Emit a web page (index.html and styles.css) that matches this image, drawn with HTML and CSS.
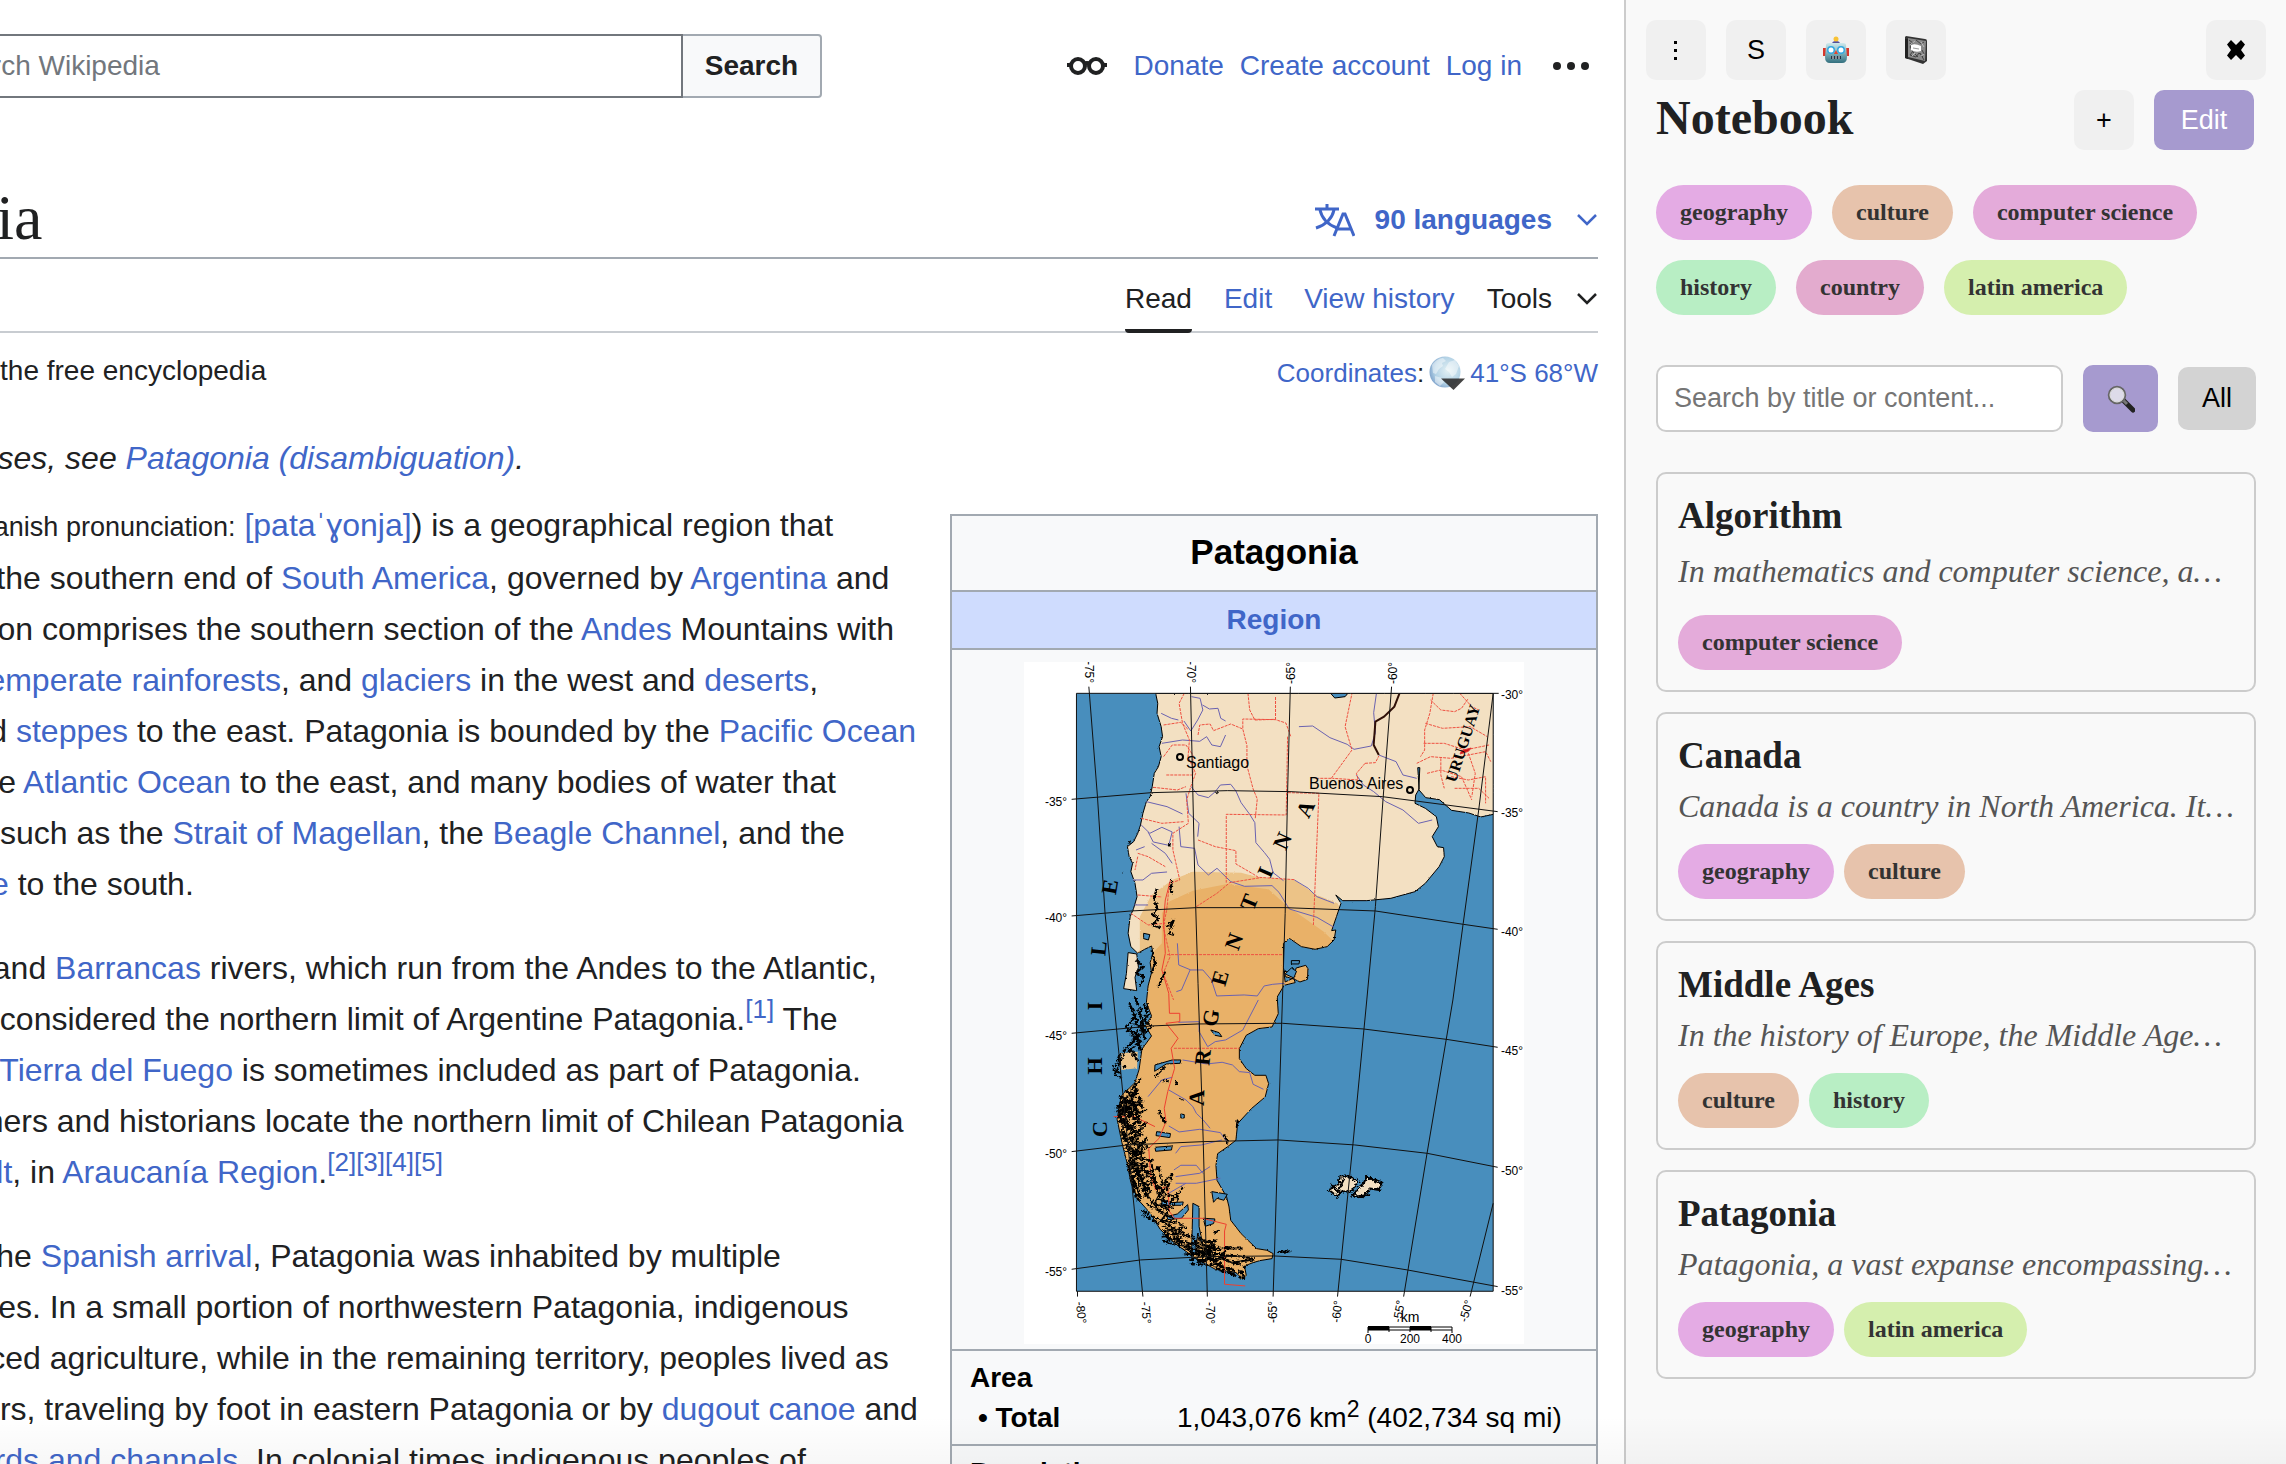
FILE: index.html
```html
<!DOCTYPE html>
<html lang="en">
<head>
<meta charset="utf-8">
<title>Patagonia - Wikipedia</title>
<link rel="stylesheet" href="styles.css">
</head>
<body>
<div class="window">
  <div class="wiki">
    <div class="page">
      <header class="site-header">
        <form class="site-search" onsubmit="return false">
          <input class="site-search-input" type="search" aria-label="Search Wikipedia" placeholder="Search Wikipedia">
          <button class="site-search-button" type="submit">Search</button>
        </form>
        <nav class="user-links" aria-label="Personal tools">
          <button class="icon-button appearance" type="button" aria-label="Appearance">
            <svg width="40" height="20" viewBox="0 0 40 20" fill="none" stroke="#202122" stroke-width="4"><circle cx="11" cy="10" r="7"/><circle cx="29" cy="10" r="7"/><path d="M17 8q3-2 6 0M0 9h4M36 9h4"/></svg>
          </button>
          <a href="#donate">Donate</a>
          <a href="#create">Create account</a>
          <a href="#login">Log in</a>
          <button class="icon-button more" type="button" aria-label="More options">
            <svg width="38" height="10" viewBox="0 0 38 10" fill="#202122"><circle cx="5" cy="5" r="4"/><circle cx="19" cy="5" r="4"/><circle cx="33" cy="5" r="4"/></svg>
          </button>
        </nav>
      </header>

      <div class="title-row">
        <h1 class="article-title">Patagonia</h1>
        <button class="languages" type="button">
          <svg width="40" height="34" viewBox="0 0 40 34" fill="none" stroke="#4066c8" stroke-width="3"><path d="M0 6h24M12 1v5M5 7c2 9 9 15 17 18M19 7C17 16 10 22 1 25" /><path d="M19 33l9-22h2l9 22M22 26h14"/></svg>
          <span>90 languages</span>
          <svg class="chevron" width="22" height="14" viewBox="0 0 22 14" fill="none" stroke="#4066c8" stroke-width="2.500"><path d="M2 2l9 9 9-9"/></svg>
        </button>
      </div>

      <nav class="tabs" aria-label="Views">
        <a class="tab tab-active" href="#read">Read</a>
        <a class="tab" href="#edit">Edit</a>
        <a class="tab" href="#history">View history</a>
        <button class="tab tab-tools" type="button">Tools
          <svg class="chevron" width="22" height="14" viewBox="0 0 22 14" fill="none" stroke="#202122" stroke-width="2.500"><path d="M2 2l9 9 9-9"/></svg>
        </button>
      </nav>

      <div class="subtitle-row">
        <div class="tagline">From Wikipedia, the free encyclopedia</div>
        <div class="coordinates">
          <span><a href="#coordinates">Coordinates</a>:</span>
          <svg width="36" height="34" viewBox="0 0 36 34">
            <defs><radialGradient id="globe" cx=".6" cy=".45" r=".6"><stop offset="0" stop-color="#e4f1f4"/><stop offset=".7" stop-color="#b4d3e6"/><stop offset="1" stop-color="#86a9cf"/></radialGradient></defs>
            <circle cx="16" cy="16" r="15.500" fill="url(#globe)"/>
            <path d="M3 9c3-4 7-7 11-7l3 3-4 2 1 3-4 3-3 5-3-1zM20 6l6-2 4 6-3 8-4 3-3-5-4-3zM6 20l7 2 2 4-4 4-5-4z" fill="#fff" opacity=".45"/>
            <path d="M12 22.500h24L24.500 34z" fill="#333" opacity=".92"/>
          </svg>
          <a href="#geohack">41°S 68°W</a>
        </div>
      </div>

      <p class="hatnote">For other uses, see <a href="#disambiguation">Patagonia (disambiguation)</a>.</p>

      <div class="article">
        <main class="prose">
          <p><b>Patagonia</b> <span class="small">(Spanish pronunciation:</span> <a href="#ipa">[pataˈɣonja]</a>) is a geographical region that encompasses the southern end of <a href="#sa">South America</a>, governed by <a href="#ar">Argentina</a> and <a href="#cl">Chile</a>. The region comprises the southern section of the <a href="#andes">Andes</a> Mountains with lakes, fjords, <a href="#rainforest">temperate rainforests</a>, and <a href="#glaciers">glaciers</a> in the west and <a href="#deserts">deserts</a>, tablelands, and <a href="#steppes">steppes</a> to the east. Patagonia is bounded by the <a href="#pacific">Pacific Ocean</a> on the west, the <a href="#atlantic">Atlantic Ocean</a> to the east, and many bodies of water that connect them, such as the <a href="#magellan">Strait of Magellan</a>, the <a href="#beagle">Beagle Channel</a>, and the <a href="#drake">Drake Passage</a> to the south.</p>
          <p>The <a href="#colorado">Colorado</a> and <a href="#barrancas">Barrancas</a> rivers, which run from the Andes to the Atlantic, are commonly considered the northern limit of Argentine Patagonia.<sup><a href="#n1">[1]</a></sup> The archipelago of <a href="#tierra">Tierra del Fuego</a> is sometimes included as part of Patagonia. Most geographers and historians locate the northern limit of Chilean Patagonia at <a href="#fault">Huincul Fault</a>, in <a href="#araucania">Araucanía Region</a>.<sup><a href="#n2">[2]</a><a href="#n3">[3]</a><a href="#n4">[4]</a><a href="#n5">[5]</a></sup></p>
          <p>At the time of the <a href="#arrival">Spanish arrival</a>, Patagonia was inhabited by multiple indigenous tribes. In a small portion of northwestern Patagonia, indigenous peoples practiced agriculture, while in the remaining territory, peoples lived as hunter-gatherers, traveling by foot in eastern Patagonia or by <a href="#canoe">dugout canoe</a> and through the <a href="#fjords">fjords and channels</a>. In colonial times indigenous peoples of</p>
        </main>

        <table class="infobox">
          <tr><th class="infobox-title" colspan="2">Patagonia</th></tr>
          <tr><th class="infobox-type" colspan="2"><a href="#region">Region</a></th></tr>
          <tr><td class="infobox-map" colspan="2">
<svg class="map" viewBox="0 0 500 682" role="img" aria-label="Map of Patagonia">
  <defs>
    <clipPath id="frame"><rect x="222" y="130" width="1210" height="1794"/></clipPath>
    <path id="land" d="M452 130l6 30-2 30 12 40 4 30-10 30 6 30-8 30-12 20-6 40-6 30-11 15-10 35-7 35-8 25-12 25-18 15 5 30 10 20-5 25 12 35 6 40-10 35-10 25-6 50 8 40 20 20 20-12 20-10 4 20-8 30 4 30-10 40-5 50 15 40-18 30 18 30-28 40-8 60-12 40-40 40-12 70 14 70 16 65 10 55 20 50 35 40 30 50 40 40 60 45 60 35 60 10 20 20 10-12-5-28 25-10 20-6 35-6 3-15-18-10-30-5-45-45-30-40-5-40-7-30-28-50-3-45 5-35 28-20 25-20 5-50 40-45 40-35 10-40-8-25-32 0-25-20-20-30 0-30 20-40 35-20 40-5 18-40-3-50 20-35 32-8-4-14-25 12-4-32 32 4 4-14 28-8 6 10-1 32-22 8-16-8-26-8-6-26 0-74 17-15 35 25 40 8 35-8 20-20 5-30-12 2 14-42 13-40-15-25 20 17 70 0 70-7 70-20 30-25 40-50 15-30-2-27-18-3-15-30 18-30-6-30-32-25-30-15 2-25 10-18-4-64 6 0-3 66 20 24 40 6 35 32 50 8 35 12 37-8V130z"/>
    <clipPath id="land-clip"><use href="#land"/></clipPath>
    <filter id="rough" x="-10%" y="-10%" width="120%" height="120%"><feTurbulence type="fractalNoise" baseFrequency=".16" numOctaves="2" seed="4"/><feDisplacementMap in="SourceGraphic" scale="14" xChannelSelector="R" yChannelSelector="G"/></filter>
    <filter id="rough-coast" x="-10%" y="-10%" width="120%" height="120%"><feTurbulence type="fractalNoise" baseFrequency=".2" numOctaves="2" seed="7"/><feDisplacementMap in="SourceGraphic" scale="6" xChannelSelector="R" yChannelSelector="G"/></filter>
  </defs>
  <rect width="500" height="682" fill="#fff"/>
  <g transform="translate(-24 -12) scale(.3444 .3333)">
    <rect x="222" y="130" width="1210" height="1794" fill="#488ebd"/>
    <g clip-path="url(#frame)">
      <g filter="url(#rough-coast)">
      <use href="#land" fill="#f3e0c2"/>
      <g clip-path="url(#land-clip)">
        <path fill="#ecc387" d="M406 900V800l34-65 60-45 60-25 140 3 55 15 100 7 65 45 60 25 40 80v160l-200 1050H200V1100z"/>
        <path fill="#e9b167" d="M425 930l45-50V790l20-35 70-33 100-20 120 16 50 47 110 80 100 100v1100H200V1080z"/>
      </g>
      <path fill="#f3e0c2" d="M372 908l25 4 5 40-10 30 5 40-38-6 8-45z"/>
      <path fill="#ecc387" d="M350 1210l50-5-2 50-45 5z"/>
      <g class="coast"><use href="#land"/><path d="M372 908l25 4 5 40-10 30 5 40-38-6 8-45z"/></g>
      <path class="lake" d="M470 1650l30 8 32-2-2 10-60 0zM615 1625l45 8-10 18-20-6-10 12zM485 1700l30-8 30-28 2 16-20 25-40 4zM560 1660l18 10 0 60 12 60-16-40-6 60-12 10zM590 1705l34 2-4 14-24 8zM846 932l24 0-2 10-22 0zM828 972l18-18 15 10-8 20zM455 1445l40 6-2 12-40-6zM450 1492l50-4-2 12-46 4zM450 1245l50-15 25 0-2 10-40 2-34 22zM612 1140l24 8 8 12-20-4zM417 850l18 4-4 16-14-4zM520 1345l14 6M525 1392l10 2 0 10-10 0z"/>
      </g>
      <path class="lake" d="M960 130l12 14 30-4 8-10z"/>
      <g class="river">
        <path d="M468 190l30 15 20 5M556 140l25 5 8 35-15 30-20 33-20-30M588 165l20 12 25-2 8 30 14 8M470 280l60-10 50 4 20-14 15 25 25 5 15-35M555 410l20 25 30 8 20-18 15-20 30-2 15 20 15 35 25 35 15 25 3 60 25 30 15 20 10 40 30 24"/>
        <path d="M868 230l40-2 50 35 50 20 20 15 50-10 12-40-5-60 8-58M1100 315l50 20 20 40 40 10M1035 375l20 30 30 20 35 30 50 25 45 40 40-10M425 455l60 15 45 22M410 525l25 25 35-18 30 14-10 40-45-10-15-30M540 430l8 60 30 30-4 40M520 530l5 60 40 5 10 50 30 30 25-20 40 40 40 14 80-2 20 20 30 50 80 25 50 30M385 690l30 0 25-20 45-4M440 580l40 30 20 30M390 765l40 0M395 600l25-10"/>
        <path d="M855 690l40 25 25 25 50 20M515 880l4 65 35 15 35 0 25 30 15 48 80-3 38 3 20-30 25-5 35-3M552 960l-25 60-15 5M750 1050l-45 90-50 30-30 5-22 15-25-45 0-30-60 2M530 1230l70 12 45-5 30 8 20 20 30 3 10 35 30 15M490 1320l50 30 20 20 10 20 20 20 20 25M490 1428l30 18 60-8 60 10 20 30M510 1510l15-20 60-5 60-15M505 1560l20-14 45 0 20 25M510 1580l70-10 30-20M510 1600l60 0 70-15M490 1630l50-30M430 1340l40-50 30-8"/>
      </g>
      <g class="border">
        <path d="M535 130l-15 30 10 60 20 50-4 50 22 50-14 40-12 40 5 70-45 30 0 50 20 90-30 10-8 80-10 50 20 90-20 50 30 80M720 130l5 50 15 30 60-2 0-70M705 235l0-28 95 2 30 10 14 40M575 255l5-30 30-3 10 20 50-20 35 15 12 50 0 60 18 70 12 30-6 60M835 260l-4 235-174-2 0 205M836 428l90 2-16 395M962 385l-38 0M962 385l60-85-20-70 20-100M1060 340l-25 30 5 20-75-5M1060 340l30-2 10-20M575 570l50 20 60 12 0 40 50 30 15 10 105 7M570 770l60-40 37-32 90-15M485 914h335M505 1195h190"/>
        <path d="M1258 130l-10 60-15 50 0 60-12 20M1250 150l30 30 40 5 20-10 20-30M1335 130l35 40 20 10M1235 220l50 15 80-5 50 30M1230 280l60 0 60 20 70-15M1210 340l40-20 60 5 100-20 15 30M1240 370l40-10 60 20 30 70M1280 325l0 50 10 40M1360 310l20 60-10 70M1310 380l50 10 50-10 0 80M1320 415l70 0 30 30M475 225l50-8 20 20M475 320l25-35 40 0 20 30 0 60-80 0M445 412l70 8 25-10M410 505l60 15 65-5M400 610l30 10 50 30M400 620l-8 40M400 735l70 6M380 790l50 35 50-5"/>
      </g>
      <path class="border-solid" d="M495 690l-15 60-5 60 5 100-10 50 20 70 2 60 30 0 0 25-40 5 35 45-20 30 10 60-20 70-10 50 5 40-20 50-30 30 5 80 15 45 35-10 5 75 15 20 80 0 70 18-5 20 0 160 60 5M450 1430l-60-30-60 0"/>
      <path fill="none" stroke="#301008" stroke-width="2" d="M1160 130l-15 40-30 30-25 15-5 70 15 30"/>
      <path d="M1340 302l28-8-8 10-24 8z" fill="#c11" stroke="#d33" stroke-width="1"/>
      <g filter="url(#rough)">
        <path id="isles" class="isles" d="M375 1060l20 40-30 30 40 30-35 30 30 30M400 1080l15 30-20 40 10 40M350 1210l-20 50 20 10M395 1300l-20 30 20 40-40-20-10 50 40-30 20 30-50 20 0 40 50-20-40 50 30 20 15-30-40 60 10 30 30-20 M345 1340l35 10-40 20 50 10-45 20 40 30-30 20 35 20M375 1490l40 20-40 30 50 10-40 30 20 50 30-20-30-20 40-20 10 50 30-30-20 60 30 10 20-30 M380 1570l10 60 15 10M410 1680l70 40 40 30-50 10 70 20 20 20 50 10-60 20 70 0 20 20 60 20 M530 1800l80-10-20 30 60-10-30 30 60 20 M470 1740l50 30 60 20 40 20"/>
        <use href="#isles" x="16" y="-18"/>
        <use href="#isles" x="4" y="14"/>
        <path class="isles-thin" d="M430 1060l-10 50 20 20-20 20M440 1540l10 60 20 20-20 40 40 20-20 30 40 10M400 1560l30 80 40 50M640 1815l60 5 40 8-60 10M690 1860l20 20-10-20 10 30M480 1250l-30 30M500 690l-5 30 6 10M455 715l-8 30 10 30-15 20 20 10-20 20 25 10M485 830l20-20-15 40 15 5M480 965l-20 45M440 900l10 40-10 30M395 930l20 20-20 20 25 10-15 30M460 1380l20 40M470 1290l20 5M510 1290l5 15M655 1796h50M808 1806l35-2M690 1410l-3 22M650 1450l12 30M490 580l4 10M372 575l8 4M356 668l3 2M628 428l4 2M620 1750l15-8"/>
        <path class="falklands" d="M985 1580l30 0 25 15-20 30-30 0-10 15-25-20 30-20zM1065 1580l20 12 22 6-6 22-25-4-24 28-28-6 20-28 12-10z"/>
        <path class="falklands" d="M960 1600l25 30M1000 1585l-20 40M1030 1640l45-5M1060 1580l45 15"/>
      </g>
    </g>
    <g class="grid">
      <path d="M258 110l25 330 22 350 25 260 85 890M553 110l12 550 10 340 15 470 12 470M843 110l-8 320-7 360-8 260-27 890M1137 110l-25 340-22 320-25 280-40 430-45 460M1432 130l-42 350-45 340-30 230-75 460-68 430M1432 1660l-67 280M225 1924v16"/>
      <path d="M208 448l232-20 220-6 185 3 265 15 335 45M208 798l172-15 190-10h258l262 10 255 40 100 15M208 1150l232-22 135-6 245-2 235 17 240 31 150 24M208 1505l162-20 220-10 218-5 222 15 210 25 205 42M208 1858l200-28 192-10 195-2 195 10 193 32 262 50M1432 130h16"/>
      <rect x="222" y="130" width="1210" height="1794"/>
    </g>
  </g>
  <g class="degree">
    <text x="32" y="144">-35°</text><text x="32" y="260">-40°</text><text x="32" y="378">-45°</text><text x="32" y="496">-50°</text><text x="32" y="614">-55°</text>
    <text x="488" y="37">-30°</text><text x="488" y="155">-35°</text><text x="488" y="274">-40°</text><text x="488" y="393">-45°</text><text x="488" y="513">-50°</text><text x="488" y="633">-55°</text>
    <text transform="translate(61 10) rotate(90)">-75°</text><text transform="translate(163 10) rotate(90)">-70°</text><text transform="translate(271 11) rotate(-90)">-65°</text><text transform="translate(373 11) rotate(-90)">-60°</text>
    <text transform="translate(53 651) rotate(84)">-80°</text><text transform="translate(118 651) rotate(86)">-75°</text><text transform="translate(182 651) rotate(90)">-70°</text><text transform="translate(253 650) rotate(-90)">-65°</text><text transform="translate(317 650) rotate(-84)">-60°</text><text transform="translate(379 650) rotate(-80)">-55°</text><text transform="translate(446 650) rotate(-74)">-50°</text>
    <text x="344" y="681">0</text><text x="386" y="681">200</text><text x="428" y="681">400</text>
    <text class="km" x="386" y="660">km</text>
  </g>
  <path d="M344 671v-6h84v6M365 665v5M386 665v5M407 665v5M344 668h84" fill="none" stroke="#000"/>
  <path d="M344 664h21v4h-21zM386 664h21v4h-21z"/>
  <g class="city">
    <text x="162" y="106">Santiago</text><text x="285" y="127">Buenos Aires</text>
    <circle cx="156" cy="95" r="3"/><circle cx="386" cy="128" r="3"/>
  </g>
  <g class="country">
    <text transform="translate(288 150) rotate(-65)">A</text><text transform="translate(265 182) rotate(-65)">N</text><text transform="translate(248 213) rotate(-66)">I</text><text transform="translate(232 243) rotate(-68)">T</text><text transform="translate(217 282) rotate(-70)">N</text><text transform="translate(203 318) rotate(-74)">E</text><text transform="translate(194 357) rotate(-80)">G</text><text transform="translate(186 396) rotate(-84)">R</text><text transform="translate(180 436) rotate(-88)">A</text>
    <text transform="translate(83 467) rotate(-90)">C</text><text transform="translate(78 404) rotate(-90)">H</text><text transform="translate(78 344) rotate(-90)">I</text><text transform="translate(82 287) rotate(-84)">L</text><text transform="translate(93 226) rotate(-80)">E</text>
    <text class="uruguay" transform="translate(444 83) rotate(-72)">URUGUAY</text>
  </g>
</svg>
          </td></tr>
          <tr><th class="infobox-group" colspan="2">Area</th></tr>
          <tr class="infobox-item"><th scope="row">• Total</th><td>1,043,076 km<sup>2</sup> (402,734 sq mi)</td></tr>
          <tr><th class="infobox-group" colspan="2">Population</th></tr>
        </table>
      </div>
    </div>
  </div>

  <aside class="notebook">
    <div class="toolbar">
      <button class="tool" type="button" aria-label="Menu"><svg width="6" height="26" viewBox="0 0 6 26"><path d="M1 4h3v3H1zM1 12h3v3H1zM1 20h3v3H1z"/></svg></button>
      <button class="tool" type="button">S</button>
      <button class="tool" type="button" aria-label="Assistant">
        <svg width="26" height="28" viewBox="0 0 26 28"><defs><linearGradient id="bot" x2="0" y2="1"><stop offset="0" stop-color="#cfe9ec"/><stop offset=".5" stop-color="#7fb3bd"/><stop offset="1" stop-color="#336f7e"/></linearGradient></defs><path d="M0 12h3v8H0zM23 12h3v8h-3z" fill="#d8382c"/><path d="M9 8q0-3 4-3t4 3z" fill="#54509a"/><circle cx="13" cy="3" r="2.500" fill="#f8c234"/><path d="M3 9q0-2 3-2h14q3 0 3 2l1 12q0 6-5 6H7q-5 0-5-6z" fill="url(#bot)"/><circle cx="8" cy="14" r="4" fill="#35a8e0"/><circle cx="18" cy="14" r="4" fill="#35a8e0"/><circle cx="8" cy="14" r="2.500" fill="#fff"/><circle cx="18" cy="14" r="2.500" fill="#fff"/><path d="M13 14l2 4h-4z" fill="#e2452f"/><path d="M8 20h10v3H8z" fill="#234"/><path d="M10 20v3M13 20v3M16 20v3" stroke="#dfe9ea"/></svg>
      </button>
      <button class="tool" type="button" aria-label="Notebook">
        <svg width="24" height="28" viewBox="0 0 24 28"><path d="M2 0l19 3q2 0 2 2v20l-4 3L1 22V1z" fill="#333"/><path d="M4 2l18 3-1 20L4 21z" fill="#8a8a8a"/><path d="M5 4l4 3-3 4 3 4-3 4 6 2 3-4 4 4M12 4l5 4 3-2M18 14l2 4M6 7l3 6M16 17l4 7M9 16l5 5" stroke="#444" fill="none"/><path d="M6 9l5-4M17 6l3 5M8 20l3-3M17 20l3-2" stroke="#bbb"/><path d="M7 9q4-2 10 1v5q-5 2-10-1z" fill="#fff"/><path d="M9 12l6 1" stroke="#999"/><path d="M1 3v19l3 1V3z" fill="#222"/></svg>
      </button>
      <button class="tool tool-close" type="button" aria-label="Close">
        <svg width="20" height="22" viewBox="0 0 20 20"><path d="M5 0l5 5 5-5 4 4.500-4 5.500 4 5.500-4 4.500-5-5-5 5-4-4.500 4-5.500-4-5.500z"/></svg>
      </button>
    </div>

    <div class="notebook-body">
      <div class="notebook-header">
        <h2 class="notebook-title">Notebook</h2>
        <button class="tool" type="button">+</button>
        <button class="edit" type="button">Edit</button>
      </div>

      <div class="tags filter-tags">
        <span class="tag geography">geography</span>
        <span class="tag culture">culture</span>
        <span class="tag computer-science">computer science</span>
        <span class="tag history">history</span>
        <span class="tag country-tag">country</span>
        <span class="tag latin-america">latin america</span>
      </div>

      <form class="note-search" onsubmit="return false">
        <input class="note-search-input" type="text" aria-label="Search notes" placeholder="Search by title or content...">
        <button class="note-search-button" type="submit" aria-label="Search">
          <svg width="28" height="28" viewBox="0 0 28 28"><path d="M17 16l9 9" stroke="#222" stroke-width="5" stroke-linecap="round"/><path d="M16 15l4 4" stroke="#777" stroke-width="3"/><circle cx="10" cy="10" r="8" fill="#dddbe9" stroke="#666" stroke-width="2.500"/><circle cx="10" cy="10" r="7" fill="none" stroke="#eee"/></svg>
        </button>
        <button class="note-all" type="button">All</button>
      </form>

      <div class="notes">
        <article class="note">
          <h3 class="note-title">Algorithm</h3>
          <p class="excerpt excerpt-tall">In mathematics and computer science, an algorithm is a finite sequence of instructions.</p>
          <div class="tags"><span class="tag computer-science">computer science</span></div>
        </article>
        <article class="note">
          <h3 class="note-title">Canada</h3>
          <p class="excerpt">Canada is a country in North America. Its ten provinces and three territories extend from coast to coast.</p>
          <div class="tags"><span class="tag geography">geography</span><span class="tag culture">culture</span></div>
        </article>
        <article class="note">
          <h3 class="note-title">Middle Ages</h3>
          <p class="excerpt">In the history of Europe, the Middle Ages lasted from the 5th to the late 15th centuries.</p>
          <div class="tags"><span class="tag culture">culture</span><span class="tag history">history</span></div>
        </article>
        <article class="note">
          <h3 class="note-title">Patagonia</h3>
          <p class="excerpt">Patagonia, a vast expanse encompassing the southern end of South America.</p>
          <div class="tags"><span class="tag geography">geography</span><span class="tag latin-america">latin america</span></div>
        </article>
      </div>
    </div>
  </aside>
</div>
</body>
</html>
```
FILE: styles.css
```css
* { box-sizing: border-box; }

body {
  margin: 0;
  background: #fff;
  color: #202122;
  font-family: "Liberation Sans", Arial, sans-serif;
  font-size: 28px;
}

button, input { font-family: inherit; color: inherit; }
button { border: 0; padding: 0; background: none; cursor: pointer; }
a { color: #4066c8; text-decoration: none; }
svg { display: block; }
h1, h2, h3, p { margin: 0; }

.window {
  display: flex;
  height: 100vh;
  overflow: hidden;
  position: relative;
}

/* soft shade along the lower edge of the window */
.window::after {
  content: "";
  position: absolute;
  inset: auto 0 0;
  height: 48px;
  background: linear-gradient(transparent, rgba(0, 0, 0, .03));
  pointer-events: none;
}

/* ---------- article pane ---------- */

.wiki { flex: 1; min-width: 0; overflow: hidden; }

/* the pane is scrolled sideways past the page's left margin */
.page { margin-left: -210px; padding: 34px 26px 0 0; }

.site-header {
  display: flex;
  align-items: center;
  justify-content: space-between;
  height: 64px;
  margin-bottom: 85px;
  padding-left: 80px;
}

.site-search { display: flex; flex: 0 1 952px; height: 64px; }

.site-search-input {
  flex: 1;
  min-width: 0;
  padding: 0 16px 0 70px;
  border: 2px solid #72777d;
  border-radius: 0;
  background: #fff;
  font-size: 28px;
  outline: 0;
  appearance: none;
}
.site-search-input::placeholder { color: #72777d; opacity: 1; }

.site-search-button {
  width: 139px;
  border: 2px solid #a2a9b1;
  border-left: 0;
  border-radius: 0 4px 4px 0;
  background: #f8f9fa;
  font-size: 28px;
  font-weight: bold;
}

.user-links { display: flex; align-items: center; gap: 16px; padding-right: 8px; }
.appearance { margin-right: 11px; }
.more { margin-left: 14px; }

.title-row {
  display: flex;
  align-items: flex-start;
  justify-content: space-between;
  height: 76px;
  border-bottom: 2px solid #a2a9b1;
}

.article-title {
  font-family: "Liberation Serif", Georgia, serif;
  font-size: 64px;
  font-weight: normal;
  line-height: 70px;
}

.languages {
  display: flex;
  align-items: center;
  height: 74px;
  gap: 20px;
  color: #4066c8;
  font-size: 28px;
  font-weight: bold;
}
.languages .chevron { margin-left: 4px; }

.tabs {
  display: flex;
  justify-content: flex-end;
  gap: 32px;
  box-shadow: inset 0 -2px #c8ccd1;
}

.tab {
  padding: 24px 0 14px;
  border-bottom: 4px solid transparent;
  font-size: 28px;
  line-height: 32px;
}
.tab-active { color: #202122; border-color: #202122; border-radius: 0 0 4px 4px; }
.tab-tools { display: flex; align-items: center; gap: 24px; }

.subtitle-row {
  display: flex;
  justify-content: space-between;
  padding-top: 22px;
  margin-bottom: 42px;
}
.tagline { line-height: 32px; }
.coordinates {
  display: flex;
  align-items: center;
  gap: 5px;
  font-size: 26px;
  line-height: 36px;
}

.hatnote {
  padding-left: 51px;
  margin-bottom: 16px;
  font-size: 32px;
  font-style: italic;
  line-height: 51px;
}

.article {
  display: grid;
  grid-template-columns: 1fr 648px;
  gap: 26px;
  align-items: start;
}

.prose p {
  margin-bottom: 33px;
  font-size: 32px;
  line-height: 51px;
}
.prose sup { font-size: 26px; line-height: 1; }
.small { font-size: 27px; }

sup { line-height: 0; }

.infobox {
  margin-top: 14px;
  width: 100%;
  border: 2px solid #a2a9b1;
  border-top: 0;
  border-spacing: 0;
  background: #f8f9fa;
  color: #000;
  font-size: 28px;
  line-height: 40px;
}
.infobox th, .infobox td { padding: 0; text-align: left; }
.infobox .infobox-title,
.infobox .infobox-type,
.infobox .infobox-map,
.infobox .infobox-group { border-top: 2px solid #a2a9b1; }
.infobox .infobox-title { padding: 16px 0 18px; text-align: center; font-size: 35px; }
.infobox .infobox-type { padding: 8px 0; text-align: center; background: #cfdcfe; }
.infobox .infobox-map { padding: 12px 0 5px; }
.infobox .infobox-group { padding: 7px 18px 0; }
.infobox-item th, .infobox-item td { vertical-align: top; }
.infobox .infobox-item th { width: 225px; padding: 0 0 6px 26px; }
.infobox-item sup { font-size: 23px; }

/* ---------- map ---------- */

.map { width: 500px; max-width: 100%; margin: 0 auto; }
.map path, .map rect, .map use { vector-effect: non-scaling-stroke; }
.coast { fill: none; stroke: #000; stroke-width: 1px; }
.lake { fill: #488ebd; stroke: #000; stroke-width: 1px; }
.grid { fill: none; stroke: #111; stroke-width: 1px; }
.river { fill: none; stroke: #6a62b0; stroke-width: 1px; }
.border { fill: none; stroke: #ee5040; stroke-width: 1px; stroke-dasharray: 3 1; }
.border-solid { fill: none; stroke: #ee4030; stroke-width: 1px; }
.isles { fill: none; stroke: #000; stroke-width: 2px; stroke-dasharray: 9 2; }
.isles-thin { fill: none; stroke: #000; stroke-width: 2px; }
.falklands { fill: #f3e0c2; stroke: #000; stroke-width: 2px; }
.degree { font-size: 12px; text-anchor: middle; }
.degree .km { font-size: 14px; }
.city { font-size: 16px; }
.city circle { fill: none; stroke: #000; stroke-width: 2px; }
.country {
  font-family: "Liberation Serif", "Times New Roman", serif;
  font-size: 22px;
  font-weight: bold;
  text-anchor: middle;
}
.country .uruguay { font-size: 16px; }

/* ---------- notebook pane ---------- */

.notebook {
  flex: none;
  width: 662px;
  border-left: 2px solid #ccc;
  background: #f9f9f9;
  font-family: "Liberation Serif", "Times New Roman", serif;
}

.notebook button, .notebook input {
  font-family: "Liberation Sans", Arial, sans-serif;
  font-size: 27px;
  border-radius: 10px;
}

.toolbar { display: flex; gap: 20px; padding: 20px 20px 10px; }

.tool {
  display: flex;
  align-items: center;
  justify-content: center;
  width: 60px;
  height: 60px;
  background: #f0f0f0;
  color: #000;
}
.tool-close { margin-left: auto; }

.notebook-body { padding: 0 30px; }
.notebook-header { display: flex; gap: 20px; padding-right: 2px; }
.notebook-title { flex: 1; font-size: 48px; line-height: 56px; }
.edit { width: 100px; height: 60px; background: #a69acf; color: #fff; }

.tags { display: flex; flex-wrap: wrap; gap: 10px; }
.filter-tags { gap: 20px; margin: 35px 0 50px; }

.tag {
  padding: 14px 24px;
  border-radius: 28px;
  color: #333;
  font-size: 24px;
  font-weight: bold;
  line-height: 27px;
}
.geography { background: #e4abe4; }
.culture { background: #e7c3ac; }
.computer-science { background: #e4abda; }
.history { background: #b8eec4; }
.country-tag { background: #e3abce; }
.latin-america { background: #d5efae; }

.note-search { display: flex; align-items: center; gap: 20px; margin-bottom: 40px; }
.note-search-input {
  flex: 1;
  min-width: 0;
  height: 67px;
  padding: 0 16px;
  border: 2px solid #ccc;
  background: #fff;
  outline: 0;
}
.note-search-input::placeholder { color: #757575; opacity: 1; }
.note-search-button {
  display: flex;
  align-items: center;
  justify-content: center;
  width: 75px;
  height: 67px;
  background: #a69acf;
}
.note-all { width: 78px; height: 63px; background: #d3d3d3; color: #000; }

.notes { display: flex; flex-direction: column; gap: 20px; }
.note { padding: 20px; border: 2px solid #ccc; border-radius: 10px; }
.note-title { margin-bottom: 10px; font-size: 37px; line-height: 44px; }
.excerpt {
  margin-bottom: 20px;
  overflow: hidden;
  color: #555;
  font-size: 32px;
  font-style: italic;
  line-height: 36px;
  text-overflow: ellipsis;
  white-space: nowrap;
}
.excerpt-tall { line-height: 47px; }
```
